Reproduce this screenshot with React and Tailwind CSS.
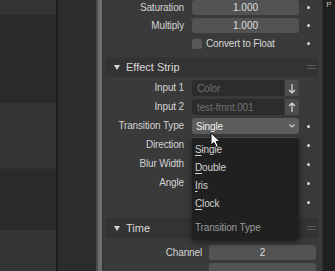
import React from "react";

const font = { fontFamily: '"Liberation Sans", Arial, sans-serif' };

function Dot({ hidden }) {
  return <div className={`ml-[8px] w-[3px] h-[3px] rounded-full ${hidden ? "" : "bg-[#d8d8d8]"}`} />;
}

function Label({ children, w = "w-[81px]" }) {
  return (
    <div className={`${w} shrink-0 text-right text-[10px] tracking-[-0.15px] text-[#d2d2d2] leading-none`}>
      {children}
    </div>
  );
}

function NumRow({ label, value, h = "h-[15px]", mt = "" }) {
  return (
    <div className={`flex items-center ${h} ${mt}`}>
      <Label>{label}</Label>
      <div className={`ml-[8px] w-[107px] ${h} rounded-[3px] bg-[#535353] flex items-center justify-center text-[10px] text-[#dedede]`}>
        {value}
      </div>
      <Dot />
    </div>
  );
}

function Header({ title, mt }) {
  return (
    <div className={`${mt} ml-[2px] mr-[4px] h-[20px] rounded-t-[3px] bg-[#333333] flex items-center`}>
      <svg width="6" height="5" viewBox="0 0 6 5" className="ml-[9px]">
        <path d="M0 0 L6 0 L3 5 Z" fill="#d6d6d6" />
      </svg>
      <span className="ml-[6px] text-[11px] text-[#dadada]">{title}</span>
      <div className="ml-auto mr-[2px] flex flex-col gap-[2px]">
        <div className="w-[9px] h-px bg-[#5c5c5c]" />
        <div className="w-[9px] h-px bg-[#5c5c5c]" />
      </div>
    </div>
  );
}

function ObjRow({ label, text, up }) {
  return (
    <div className="flex items-center h-[16px] mt-[3px]">
      <Label>{label}</Label>
      <div className="ml-[8px] w-[92px] h-[16px] rounded-l-[3px] bg-[#2c2c2c] flex items-center pl-[5px] text-[10px] tracking-[-0.15px] text-[#6f6f6f]">
        {text}
      </div>
      <div className="ml-px w-[14px] h-[16px] rounded-r-[3px] bg-[#4c4c4c] flex items-center justify-center">
        <svg width="8" height="11" viewBox="0 0 8 11">
          {up ? (
            <path d="M4 10 L4 1 M1 4 L4 1 L7 4" stroke="#dcdcdc" strokeWidth="1.2" fill="none" />
          ) : (
            <path d="M4 1 L4 10 M1 7 L4 10 L7 7" stroke="#dcdcdc" strokeWidth="1.2" fill="none" />
          )}
        </svg>
      </div>
      <div className="ml-[8px] w-[3px]" />
    </div>
  );
}

function PlainRow({ label }) {
  return (
    <div className="flex items-center h-[16px] mt-[3px]">
      <Label>{label}</Label>
      <div className="ml-[8px] w-[107px] h-[16px] rounded-[3px] bg-[#535353]" />
      <Dot />
    </div>
  );
}

export default function App() {
  return (
    <div className="flex w-[335px] h-[271px] overflow-hidden bg-[#393939]" style={font}>
      {/* left editor */}
      <div className="w-[56px] flex flex-col">
        <div className="h-[14px] bg-[#343434]" />
        <div className="h-[89px] bg-[#2a2a2a] border-t border-[#303030]" />
        <div className="h-[65px] bg-[#343434]" />
        <div className="h-[62px] bg-[#2a2a2a] border-t border-[#303030]" />
        <div className="flex-1 bg-[#343434]" />
      </div>
      <div className="w-[2px] bg-[#1c1c1c]" />
      <div className="w-[38px] bg-[#2c2c2c]" />
      <div className="w-[2px] bg-[#4a4a4a]" />
      <div className="w-[4px] bg-[#6e6e6e]" />

      {/* properties panel */}
      <div className="relative w-[220px] bg-[#3a3a3a] border-l border-[#2f2f2f]">
        <NumRow label="Saturation" value="1.000" />
        <NumRow label="Multiply" value="1.000" mt="mt-[3px]" />
        <div className="flex items-center h-[15px] mt-[3px]">
          <div className="w-[81px]" />
          <div className="ml-[8px] w-[10px] h-[10px] rounded-[2px] bg-[#585858]" />
          <span className="ml-[4px] w-[93px] text-[10px] tracking-[-0.15px] text-[#d6d6d6]">Convert to Float</span>
          <Dot />
        </div>

        <Header title="Effect Strip" mt="mt-[6px]" />
        <div className="mt-[3px]" />
        <ObjRow label="Input 1" text="Color" />
        <ObjRow label="Input 2" text="test-fmnt.001" up />
        <div className="flex items-center h-[16px] mt-[3px]">
          <Label>Transition Type</Label>
          <div className="ml-[8px] w-[107px] h-[16px] rounded-[3px] bg-[#5d5d5d] flex items-center pl-[4px] pr-[4px] text-[10px] tracking-[-0.15px] text-[#f0f0f0]">
            <span>Single</span>
            <svg width="6" height="4" viewBox="0 0 6 4" className="ml-auto">
              <path d="M0.5 0.5 L3 3 L5.5 0.5" stroke="#d0d0d0" strokeWidth="1.1" fill="none" />
            </svg>
          </div>
          <Dot />
        </div>
        <PlainRow label="Direction" />
        <PlainRow label="Blur Width" />
        <PlainRow label="Angle" />
        <PlainRow label="" />

        <Header title="Time" mt="mt-[8px]" />
        <div className="flex items-center h-[15px] mt-[7px]">
          <Label w="w-[99px]">Channel</Label>
          <div className="ml-[7px] w-[107px] h-[15px] rounded-[3px] bg-[#535353] flex items-center justify-center text-[10px] text-[#dedede]">
            2
          </div>
        </div>
        <div className="flex items-center h-[15px] mt-[3px]">
          <div className="w-[99px]" />
          <div className="ml-[7px] w-[107px] h-[15px] rounded-[3px] bg-[#535353]" />
        </div>

        {/* dropdown menu */}
        <div className="absolute left-[89px] top-[138px] w-[107px] h-[102px] bg-[#202020] rounded-b-[3px] shadow-[0_2px_6px_rgba(0,0,0,0.5)] pt-[2px] pl-[3px] text-[10px] tracking-[-0.15px] text-[#d4d4d4]">
          {[["S", "ingle"], ["D", "ouble"], ["I", "ris"], ["C", "lock"]].map(([a, b]) => (
            <div key={a + b} className="h-[18px] flex items-center">
              <span className="underline underline-offset-[2px]">{a}</span>
              {b}
            </div>
          ))}
          <div className="h-[18px] mt-[6px] flex items-center text-[#9a9a9a]">Transition Type</div>
        </div>

        {/* cursor */}
        <svg className="absolute left-[107px] top-[132px]" width="13" height="17" viewBox="0 0 13 17">
          <path d="M1 1 L1 13 L4 10.5 L6.5 15.5 L8.5 14.5 L6 9.5 L10 9.5 Z" fill="#ffffff" stroke="#111111" strokeWidth="1" strokeLinejoin="round" />
        </svg>
      </div>

      {/* right tab strip */}
      <div className="flex-1 bg-[#1f1f1f] border-l border-[#2a2a2a] flex justify-center">
        <span className="text-[8px] leading-none text-[#c0c0c0] mt-[1px]">P</span>
      </div>
    </div>
  );
}
